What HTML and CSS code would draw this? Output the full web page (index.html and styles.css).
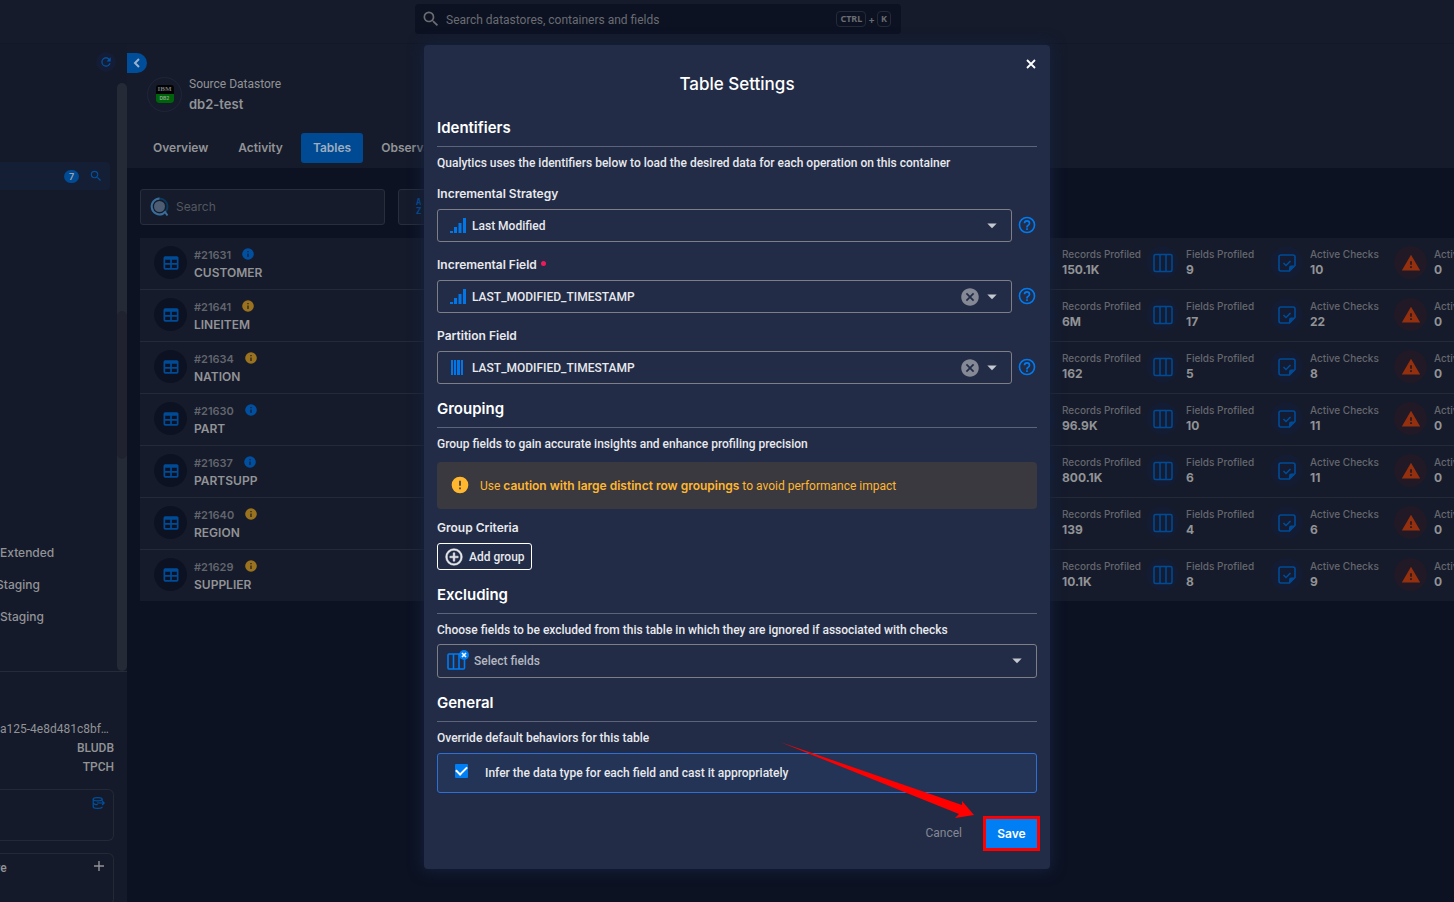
FILE: index.html
```html
<!DOCTYPE html>
<html lang="en">
<head>
<meta charset="utf-8">
<meta name="viewport" content="width=device-width, initial-scale=1">
<title>Table Settings</title>
<link rel="stylesheet" href="styles.css">
</head>
<body>
<svg class="sprite" aria-hidden="true">
  <symbol id="magnify" viewBox="0 0 24 24"><path d="M9.5,3A6.5,6.5 0 0,1 16,9.5C16,11.11 15.41,12.59 14.44,13.73L14.71,14H15.5L20.5,19L19,20.5L14,15.5V14.71L13.73,14.44C12.59,15.41 11.11,16 9.5,16A6.5,6.5 0 0,1 3,9.5A6.5,6.5 0 0,1 9.5,3M9.5,5C7,5 5,7 5,9.5C5,12 7,14 9.5,14C12,14 14,12 14,9.5C14,7 12,5 9.5,5Z"/></symbol>
  <symbol id="refresh" viewBox="0 0 24 24"><path d="M17.65,6.35C16.2,4.9 14.21,4 12,4A8,8 0 0,0 4,12A8,8 0 0,0 12,20C15.73,20 18.84,17.45 19.73,14H17.65C16.83,16.33 14.61,18 12,18A6,6 0 0,1 6,12A6,6 0 0,1 12,6C13.66,6 15.14,6.69 16.22,7.78L13,11H20V4L17.65,6.35Z"/></symbol>
  <symbol id="table" viewBox="0 0 24 24"><path d="M5,4H19A2,2 0 0,1 21,6V18A2,2 0 0,1 19,20H5A2,2 0 0,1 3,18V6A2,2 0 0,1 5,4M5,8V12H11V8H5M13,8V12H19V8H13M5,14V18H11V14H5M13,14V18H19V14H13Z"/></symbol>
  <symbol id="info" viewBox="0 0 24 24"><path d="M13,9H11V7H13M13,17H11V11H13M12,2A10,10 0 0,0 2,12A10,10 0 0,0 12,22A10,10 0 0,0 22,12A10,10 0 0,0 12,2Z"/></symbol>
  <symbol id="columns" viewBox="0 0 20 20"><g fill="none" stroke="currentColor" stroke-width="1.5"><rect x="1" y="1.5" width="18" height="17" rx="1.5"/><path d="M7 1.5v17M13 1.5v17"/></g></symbol>
  <symbol id="check-note" viewBox="0 0 20 20"><g fill="none" stroke="currentColor" stroke-width="1.6" stroke-linejoin="round"><path d="M12.500 18H4a2 2 0 0 1-2-2V4a2 2 0 0 1 2-2h12a2 2 0 0 1 2 2v8.500z"/><path d="M6.500 10l2.500 2.500 4.500-4.500"/></g><path d="M12 18.500v-4a2 2 0 0 1 2-2h4.500z"/></symbol>
  <symbol id="alert" viewBox="0 0 24 24"><path d="M13,14H11V10H13M13,18H11V16H13M1,21H23L12,2L1,21Z"/></symbol>
  <symbol id="help" viewBox="0 0 24 24"><path d="M11,18H13V16H11V18M12,2A10,10 0 0,0 2,12A10,10 0 0,0 12,22A10,10 0 0,0 22,12A10,10 0 0,0 12,2M12,20C7.59,20 4,16.41 4,12C4,7.59 7.59,4 12,4C16.41,4 20,7.59 20,12C20,16.41 16.41,20 12,20M12,6A4,4 0 0,0 8,10H10A2,2 0 0,1 12,8A2,2 0 0,1 14,10C14,12 11,11.75 11,15H13C13,12.75 16,12.5 16,10A4,4 0 0,0 12,6Z"/></symbol>
  <symbol id="clear" viewBox="0 0 24 24"><path d="M12,1.500C17.800,1.500 22.500,6.200 22.500,12C22.500,17.800 17.800,22.500 12,22.500C6.200,22.500 1.500,17.800 1.500,12C1.500,6.200 6.200,1.500 12,1.500M15.59,7L12,10.59L8.41,7L7,8.41L10.59,12L7,15.59L8.41,17L12,13.41L15.59,17L17,15.59L13.41,12L17,8.41L15.59,7Z"/></symbol>
  <symbol id="caret" viewBox="0 0 24 24"><path d="M7.300,9.500L12,14.200L16.700,9.500H7.300Z"/></symbol>
  <symbol id="bars" viewBox="0 0 16 16"><path d="M0 13h3v2H0zM4 9h3v6H4zM8.500 5h3v10h-3zM13 0h3v15h-3z"/></symbol>
  <symbol id="stripes" viewBox="0 0 16 16"><path d="M1 0h2v15H1zM4 0h2v15H4zM7 0h3v15H7zM11 0h2v15h-2z"/></symbol>
</svg>

<header class="topbar">
  <label class="global-search">
    <svg class="icon i20"><use href="#magnify"/></svg>
    <input type="search" placeholder="Search datastores, containers and fields" aria-label="Search datastores, containers and fields">
    <span class="keys"><kbd>CTRL</kbd>+<kbd>K</kbd></span>
  </label>
</header>

<div class="shell">
  <aside class="sidebar">
    <div class="tree">
      <div class="tree-body">
        <button class="refresh" aria-label="Refresh"><svg class="icon i14"><use href="#refresh"/></svg></button>
        <div class="tree-active"><span class="count">7</span><svg class="icon i14"><use href="#magnify"/></svg></div>
        <ul class="stores"><li>Extended</li><li class="cut">Staging</li><li>Staging</li></ul>
      </div>
      <div class="track"><div class="thumb"></div></div>
    </div>
    <div class="details">
      <p class="uuid">a125-4e8d481c8bf…</p>
      <p>BLUDB</p>
      <p>TPCH</p>
      <div class="side-card">
        <svg class="icon db" viewBox="0 0 16 16"><g fill="none" stroke="currentColor" stroke-width="1.500"><ellipse cx="7" cy="3.500" rx="5.500" ry="2"/><path d="M1.500 3.500v9c0 2.700 11 2.700 11 0M2 8c0 1.500 3 2.200 5 2.100M12.500 3.500v1.500M6 8h9M12.500 5.500L15 8l-2.500 2.500"/></g></svg>
      </div>
      <div class="side-card"><span class="cut">re</span>
        <button class="add" aria-label="Add"><svg viewBox="0 0 12 12" width="12" height="12"><path d="M6 1v10M1 6h10" stroke="currentColor" stroke-width="1.400"/></svg></button>
      </div>
    </div>
  </aside>

  <main class="main">
    <section class="store-head">
      <button class="collapse" aria-label="Collapse"><svg width="8" height="10" viewBox="0 0 8 10"><path d="M6 1L2 5l4 4" fill="none" stroke="currentColor" stroke-width="2"/></svg></button>
      <div class="store">
        <div class="store-logo"><div class="db2"><b>IBM</b><b class="green">DB2</b></div></div>
        <div><p class="store-kind">Source Datastore</p><p class="store-name">db2-test</p></div>
      </div>
      <nav class="tabs"><a href="#">Overview</a><a href="#">Activity</a><a href="#" class="on">Tables</a><a href="#">Observability</a></nav>
    </section>
    <div class="filters">
      <label class="search">
        <svg width="20" height="20" viewBox="0 0 20 20"><circle cx="9.500" cy="9.500" r="8" fill="none" stroke="#0c3a5c" stroke-width="2"/><path d="M9.500 1.500a8 8 0 1 0 3 15.500l2.500-2 2.500 3.500" fill="none" stroke="#3c6c98" stroke-width="2"/><circle cx="9.500" cy="9.500" r="5.500" fill="#4d5d74"/></svg>
        <input type="search" placeholder="Search" aria-label="Search tables">
      </label>
      <button class="sort" aria-label="Sort"><span>A</span><span>Z</span></button>
    </div>
    <ul class="rows" id="rows"></ul>
  </main>
</div>

<div class="overlay">
  <form class="modal" role="dialog" aria-labelledby="title">
    <button type="button" class="close" aria-label="Close"><svg width="10" height="10" viewBox="0 0 10 10"><path d="M1 1l8 8M9 1l-8 8" stroke="currentColor" stroke-width="1.800"/></svg></button>
    <h1 id="title">Table Settings</h1>

    <h2>Identifiers</h2>
    <p class="desc">Qualytics uses the identifiers below to load the desired data for each operation on this container</p>
    <div class="fields">
      <div class="field">
        <label for="strategy">Incremental Strategy</label>
        <div class="line">
          <div class="control"><svg class="icon lead"><use href="#bars"/></svg><select id="strategy"><option>Last Modified</option></select><svg class="icon i24"><use href="#caret"/></svg></div>
          <button type="button" class="help" aria-label="Help"><svg class="icon i20"><use href="#help"/></svg></button>
        </div>
      </div>
      <div class="field">
        <label for="incremental">Incremental Field <i class="required"></i></label>
        <div class="line">
          <div class="control"><svg class="icon lead"><use href="#bars"/></svg><select id="incremental"><option>LAST_MODIFIED_TIMESTAMP</option></select><button type="button" class="clear" aria-label="Clear"><svg class="icon i20"><use href="#clear"/></svg></button><svg class="icon i24"><use href="#caret"/></svg></div>
          <button type="button" class="help" aria-label="Help"><svg class="icon i20"><use href="#help"/></svg></button>
        </div>
      </div>
      <div class="field">
        <label for="partition">Partition Field</label>
        <div class="line">
          <div class="control"><svg class="icon lead"><use href="#stripes"/></svg><select id="partition"><option>LAST_MODIFIED_TIMESTAMP</option></select><button type="button" class="clear" aria-label="Clear"><svg class="icon i20"><use href="#clear"/></svg></button><svg class="icon i24"><use href="#caret"/></svg></div>
          <button type="button" class="help" aria-label="Help"><svg class="icon i20"><use href="#help"/></svg></button>
        </div>
      </div>
    </div>

    <h2>Grouping</h2>
    <p class="desc">Group fields to gain accurate insights and enhance profiling precision</p>
    <div class="warning">
      <svg class="icon i20" viewBox="0 0 24 24"><path d="M13,13H11V7H13M13,17H11V15H13M12,2A10,10 0 0,0 2,12A10,10 0 0,0 12,22A10,10 0 0,0 22,12A10,10 0 0,0 12,2Z"/></svg>
      <p>Use <b>caution with large distinct row groupings</b> to avoid performance impact</p>
    </div>
    <p class="group-label">Group Criteria</p>
    <button type="button" class="add-group"><svg class="icon i20" viewBox="0 0 24 24"><path stroke="currentColor" stroke-width=".600" d="M12,20C7.59,20 4,16.41 4,12C4,7.59 7.59,4 12,4C16.41,4 20,7.59 20,12C20,16.41 16.41,20 12,20M12,2A10,10 0 0,0 2,12A10,10 0 0,0 12,22A10,10 0 0,0 22,12A10,10 0 0,0 12,2M13,7H11V11H7V13H11V17H13V13H17V11H13V7Z"/></svg>Add group</button>

    <h2>Excluding</h2>
    <p class="desc">Choose fields to be excluded from this table in which they are ignored if associated with checks</p>
    <div class="control wide">
      <svg class="icon exclude" viewBox="0 0 22 20"><g fill="none" stroke="currentColor" stroke-width="1.600"><rect x="1" y="4" width="16.500" height="15" rx="1"/><path d="M6.500 4v15M12 4v15"/></g><circle cx="17" cy="5" r="5"/><path d="M15 3l4 4M19 3l-4 4" stroke="#fff" stroke-width="1.500"/></svg>
      <select class="muted" aria-label="Fields to exclude"><option>Select fields</option></select>
      <svg class="icon i24"><use href="#caret"/></svg>
    </div>

    <h2>General</h2>
    <p class="desc">Override default behaviors for this table</p>
    <label class="infer"><input type="checkbox" checked><span>Infer the data type for each field and cast it appropriately</span></label>

    <footer class="actions">
      <button type="button" class="cancel">Cancel</button>
      <button type="submit" class="save">Save</button>
      <svg class="arrow" width="194" height="80" viewBox="0 0 194 80"><path d="M0 2L182 65v-4l12 14-19 3 4-4z" fill="#fe0000"/></svg>
    </footer>
  </form>
</div>
<script src="rows.js"></script>
</body>
</html>
```

FILE: styles.css
```css
:root {
  --title: Inter, sans-serif;
  --text: Roboto, sans-serif;
}
* { box-sizing: border-box; }
body {
  margin: 0;
  height: 100vh;
  display: flex;
  flex-direction: column;
  overflow: hidden;
  background: #0c1222;
  color: #929396;
  font: 500 12px/16px var(--title);
}
p, h1, h2, ul { margin: 0; padding: 0; }
ul { list-style: none; }
button, input, select { font: inherit; color: inherit; border: 0; background: none; padding: 0; margin: 0; outline: none; }
button { cursor: pointer; }
a { color: inherit; text-decoration: none; }
.sprite { display: none; }
.icon { fill: currentColor; flex: none; display: block; }
.i14 { width: 14px; height: 14px; }
.i20 { width: 20px; height: 20px; }
.i24 { width: 24px; height: 24px; }

.topbar {
  flex: none;
  height: 44px;
  padding: 4px 138px 0 0;
  background: #151b2b;
  border-bottom: 1px solid #121828;
  display: flex;
  justify-content: center;
  align-items: start;
}
.global-search {
  width: 486px;
  height: 30px;
  padding: 0 10px 0 6px;
  display: flex;
  align-items: center;
  gap: 5px;
  border-radius: 4px;
  background: #0c1222;
  color: #6a6c72;
}
.global-search input { flex: 1; min-width: 0; padding-top: 2px; font-family: var(--text); font-weight: 400; }
input::placeholder { color: inherit; opacity: 1; }
input[type="search"] { appearance: none; }
.keys { display: flex; align-items: center; gap: 2px; font-size: 10px; font-weight: 600; }
kbd { font: 700 9px/14px "Noto Sans", sans-serif; border: 1px solid #262a38; border-radius: 4px; padding: 0 3px; }

.shell { flex: 1; min-height: 0; display: flex; }
.sidebar { width: 127px; flex: none; display: flex; flex-direction: column; background: #141a2a; }
.tree { flex: 1; min-height: 0; display: flex; border-bottom: 1px solid #252b39; }
.tree-body { flex: 1; min-width: 0; display: flex; flex-direction: column; }
.refresh { width: 20px; height: 20px; margin: 8px 1px 0 0; align-self: flex-end; border-radius: 50%; background: #141d35; color: #0056a8; display: grid; place-items: center; }
.tree-active { height: 28px; margin: 90px 7px 0 0; padding-right: 7px; border-radius: 0 4px 4px 0; background: #141e35; color: #00509f; display: flex; align-items: center; justify-content: flex-end; gap: 10px; }
.count { width: 15px; height: 13px; border-radius: 7px; background: #004b94; color: #a0a5ab; font-size: 9px; line-height: 13px; text-align: center; font-weight: 600; }
.stores { margin-top: auto; padding-bottom: 46px; line-height: 16px; display: grid; gap: 16px; }
.cut { margin-left: -4px; }
.track { width: 10px; margin-top: 39px; border-radius: 5px; background: #252a37; }
.thumb { height: 148px; margin-top: 228px; border-radius: 5px; background: #20232f; }
.details { height: 230px; flex: none; overflow: hidden; padding: 48px 13px 0 0; text-align: right; line-height: 19px; font-family: var(--text); }
.uuid { padding-right: 6px; white-space: nowrap; font-weight: 400; }
.side-card { height: 52px; margin-top: 12px; padding: 5px 8px 0 0; border: 1px solid #232936; border-left: 0; border-radius: 0 6px 6px 0; display: flex; justify-content: space-between; }
.side-card .db { margin-left: auto; width: 13px; height: 16px; color: #0050a0; }
.add { height: 16px; }

.main { flex: 1; min-width: 0; display: flex; flex-direction: column; }
.store-head { height: 124px; padding-top: 9px; background: #151b2b; display: flex; flex-direction: column; }
.collapse { flex: none; width: 20px; height: 20px; background: #004d99; color: #9ab2cc; border-radius: 0 10px 10px 0; display: grid; place-items: center; }
.store { display: flex; align-items: center; gap: 7px; margin: 2px 0 0 20px; height: 38px; }
.store-logo { width: 35px; height: 35px; border: 1px solid #202638; border-radius: 50%; display: grid; place-items: center; }
.db2 { width: 18px; height: 18px; border-radius: 3px; overflow: hidden; background: #020304; color: #777; display: grid; font: 700 7px/9px "Liberation Serif", serif; text-align: center; }
.green { background: #00620a; color: #86a888; font: 700 5px/9px var(--title); }
.store-kind { line-height: 19px; font-family: var(--text); font-weight: 400; }
.store-name { line-height: 20px; font-size: 13px; font-weight: 600; }
.tabs { display: flex; gap: 6px; margin: 20px 0 0 14px; font-weight: 600; line-height: 30px; }
.tabs a { padding: 0 12px; border-radius: 3px; }
.tabs .on { background: #004a93; color: #9dadbf; }
.filters { display: flex; gap: 13px; padding: 21px 13px 13px; }
.search { width: 245px; height: 36px; padding-left: 9px; display: flex; align-items: center; gap: 6px; border: 1px solid #282e3b; border-radius: 3px; background: #151b2b; color: #53575f; }
.search input { min-width: 0; font-weight: 400; }
.sort { width: 60px; height: 36px; padding-left: 17px; border: 1px solid #282e3b; border-radius: 3px; background: #151b2b; color: #0056a8; font: 700 9px/9px "DejaVu Sans Mono", monospace; text-align: left; }
.sort span { display: block; }
.rows { margin-left: 13px; background: #151b2b; }
.row { height: 52px; padding-left: 14px; display: flex; border-bottom: 1px solid #242a38; overflow: hidden; }
.row:last-child { height: 51px; border: 0; }
.id { flex: 1; min-width: 0; }
.id, .stat { display: flex; gap: 7px; white-space: nowrap; padding-top: 8px; }
.stat { flex: 0 0 124px; overflow: hidden; }
.stat:last-child { flex-basis: 60px; }
.disc { flex: none; width: 33px; height: 33px; border-radius: 50%; display: grid; place-items: center; background: #131c33; color: #004b96; }
.id .disc { background: #0c1222; }
.disc.danger { background: #211925; color: #95300f; }
.num { display: flex; gap: 10px; line-height: 18px; color: #62656d; font-size: 11px; font-weight: 600; }
.num .icon { margin-top: 1px; }
.num .info { color: #00509f; }
.num .warn { color: #9b721e; }
.label { font-size: 10px; color: #65676e; }
.value { font-weight: 700; line-height: 16px; }
.name { font-weight: 600; line-height: 18px; }

.overlay { position: absolute; inset: 0; padding: 45px 0 0 20px; display: flex; justify-content: center; align-items: flex-start; }
.modal { position: relative; width: 626px; padding: 27px 13px 21px; border-radius: 4px; background: #222c47; color: #e8e9ed; box-shadow: 0 0 14px 2px #14203c; }
.close { position: absolute; top: 14px; right: 14px; width: 10px; height: 10px; display: grid; place-items: center; color: #fff; }
h1 { font-size: 17px; line-height: 24px; font-weight: 500; text-align: center; color: #fff; }
h2 { margin-top: 13px; padding-bottom: 6px; border-bottom: 1px solid #5d647a; font-size: 15px; line-height: 24px; font-weight: 600; color: #fff; }
h1 + h2 { margin-top: 20px; }
.desc, .control, .infer, .add-group, .warning, .cancel { font-family: var(--text); }
.desc { margin: 8px 0 6px; }
.fields { display: grid; gap: 15px; margin-top: 15px; }
.field { display: grid; gap: 7px; }
.field label, .group-label { font-weight: 600; }
.required { display: inline-block; width: 5px; height: 5px; margin: 0 0 3px 1px; border-radius: 50%; background: #f0195b; }
.line { display: flex; align-items: center; gap: 5px; }
.control { flex: 1; min-width: 0; height: 33px; padding: 0 7px 0 12px; border: 1px solid #7d7e86; border-radius: 3px; display: flex; align-items: center; }
.control.wide { height: 34px; padding-left: 9px; }
.control select { appearance: none; flex: 1; min-width: 0; padding-left: 6px; }
.control .muted { color: #b4b8c1; padding-left: 5px; }
.control .i24 { color: #c5c8d0; }
.lead { width: 16px; height: 16px; color: #0076e8; }
.exclude { width: 22px; height: 20px; margin-bottom: 2px; color: #007cf2; }
.clear { color: #858995; }
.help { margin-bottom: 2px; color: #007af0; }
.warning { min-height: 47px; margin-top: 10px; padding-left: 13px; display: flex; align-items: center; gap: 10px; border-radius: 4px; background: #3a3940; color: #ffb730; }
.warning .icon { margin-bottom: 2px; }
.warning p { font-weight: 400; }
.warning b { font-family: var(--title); font-weight: 600; }
.group-label { margin: 11px 0 7px; }
.add-group { height: 27px; padding: 0 6px; display: flex; align-items: center; gap: 5px; border: 1px solid #fff; border-radius: 3px; }
.infer { height: 40px; margin-top: 7px; padding-left: 17px; display: flex; align-items: center; gap: 17px; border: 1px solid #2d6fd8; border-radius: 3px; background: #233456; }
.infer input { appearance: none; width: 13px; height: 14px; margin: 0 0 4px; border-radius: 1px; background: #007ff5; display: grid; place-items: center; }
.infer input:checked::after { content: ""; width: 9px; height: 5px; border: solid #fff; border-width: 0 0 2px 2px; transform: rotate(-45deg); margin-bottom: 3px; }
.actions { position: relative; margin-top: 26px; display: flex; justify-content: flex-end; gap: 13px; line-height: 29px; }
.cancel { padding: 0 11px; color: #858894; font-weight: 400; }
.save { width: 51px; height: 29px; background: #007ff5; outline: 3px solid #fe0000; color: #fff; font-weight: 600; }
.arrow { position: absolute; right: 63px; bottom: 28px; pointer-events: none; }
```

FILE: rows.js
```js
const tables = [
  ["#21631", "CUSTOMER", "info", "150.1K", 9, 10],
  ["#21641", "LINEITEM", "warn", "6M", 17, 22],
  ["#21634", "NATION", "warn", "162", 5, 8],
  ["#21630", "PART", "info", "96.9K", 10, 11],
  ["#21637", "PARTSUPP", "info", "800.1K", 6, 11],
  ["#21640", "REGION", "warn", "139", 4, 6],
  ["#21629", "SUPPLIER", "warn", "10.1K", 8, 9]
];
const icon = (id, size, cls = "") => `<svg class="icon ${size} ${cls}"><use href="#${id}"/></svg>`;
const stat = (id, label, value, cls = "") =>
  `<div class="stat"><span class="disc ${cls}">${id ? icon(id, "i20") : ""}</span><div><p class="label">${label}</p><p class="value">${value}</p></div></div>`;
document.getElementById("rows").innerHTML = tables.map(([num, name, tone, records, fields, checks]) => `
  <li class="row">
    <div class="id"><span class="disc">${icon("table", "i20")}</span>
      <div><p class="num">${num}${icon("info", "i14", tone)}</p><p class="name">${name}</p></div></div>
    ${stat("", "Records Profiled", records)}
    ${stat("columns", "Fields Profiled", fields)}
    ${stat("check-note", "Active Checks", checks)}
    ${stat("alert", "Active Anomalies", 0, "danger")}
  </li>`).join("");
```
